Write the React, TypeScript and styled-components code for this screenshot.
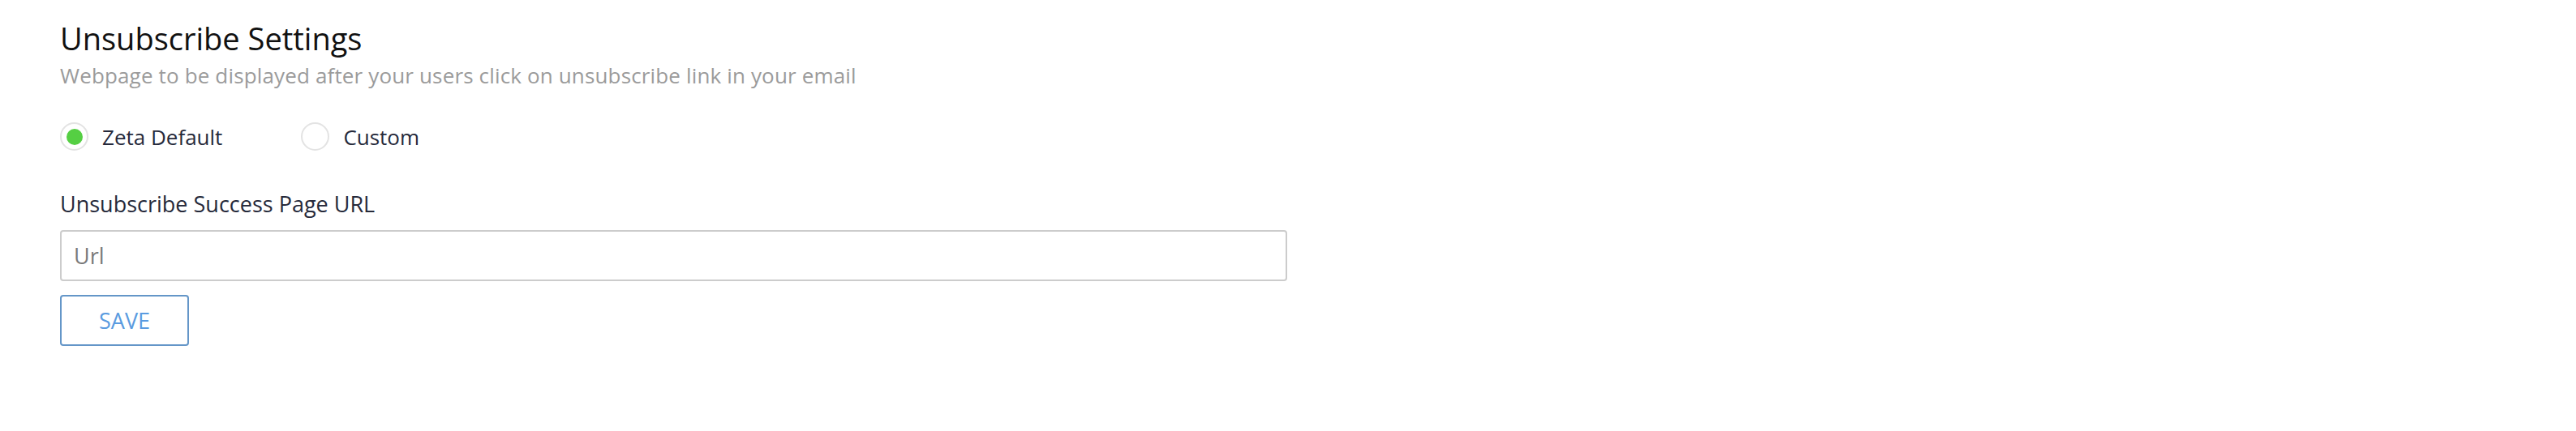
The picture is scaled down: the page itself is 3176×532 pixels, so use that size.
import React from "react"
import styled, { createGlobalStyle } from "styled-components"

const GlobalStyle = createGlobalStyle`
  html, body {
    margin: 0;
    padding: 0;
    background: #ffffff;
  }
  body {
    font-family: "Open Sans", Lato, Arial, sans-serif;
  }
`

const Page = styled.div`
  width: 3176px;
  height: 532px;
  box-sizing: border-box;
  padding: 25px 0 0 74px;
  background: #ffffff;
`

const Title = styled.h2`
  margin: 0;
  font-size: 38px;
  line-height: 44px;
  font-weight: 400;
  color: #111111;
`

const Subtitle = styled.p`
  margin: 8px 0 0;
  font-size: 26px;
  line-height: 32px;
  letter-spacing: 0.15px;
  color: #9b9b9b;
`

const RadioGroup = styled.div`
  display: flex;
  align-items: center;
  gap: 97px;
  margin-top: 42px;
`

const RadioOption = styled.label`
  display: flex;
  align-items: center;
  gap: 17px;
  cursor: pointer;
`

const RadioCircle = styled.span<{ $checked?: boolean }>`
  width: 35px;
  height: 35px;
  box-sizing: border-box;
  border-radius: 50%;
  border: 2px solid #e3e3e3;
  display: flex;
  align-items: center;
  justify-content: center;

  &::after {
    content: "";
    width: 20px;
    height: 20px;
    border-radius: 50%;
    background: ${(p) => (p.$checked ? "#55cf43" : "transparent")};
  }
`

const RadioLabel = styled.span`
  font-size: 26px;
  line-height: 32px;
  color: #262a3b;
`

const FieldLabel = styled.div`
  margin-top: 50px;
  font-size: 27px;
  line-height: 32px;
  color: #262a3b;
`

const UrlInput = styled.input`
  display: block;
  margin-top: 16px;
  width: 1513px;
  height: 63px;
  box-sizing: border-box;
  padding: 0 15px;
  border: 2px solid #cccccc;
  border-radius: 4px;
  font-family: inherit;
  font-size: 27px;
  color: #333333;
  outline: none;

  &::placeholder {
    color: #7a7a7a;
  }
`

const SaveButton = styled.button`
  display: block;
  margin-top: 17px;
  width: 159px;
  height: 63px;
  box-sizing: border-box;
  padding: 0;
  border: 2px solid #6496c8;
  border-radius: 4px;
  background: #ffffff;
  font-family: inherit;
  font-size: 27px;
  color: #5a9be0;
  cursor: pointer;
`

const App = () => {
  return (
    <Page>
      <GlobalStyle />
      <Title>Unsubscribe Settings</Title>
      <Subtitle>
        Webpage to be displayed after your users click on unsubscribe link in
        your email
      </Subtitle>
      <RadioGroup>
        <RadioOption>
          <RadioCircle $checked />
          <RadioLabel>Zeta Default</RadioLabel>
        </RadioOption>
        <RadioOption>
          <RadioCircle />
          <RadioLabel>Custom</RadioLabel>
        </RadioOption>
      </RadioGroup>
      <FieldLabel>Unsubscribe Success Page URL</FieldLabel>
      <UrlInput placeholder="Url" />
      <SaveButton>SAVE</SaveButton>
    </Page>
  )
}

export default App
